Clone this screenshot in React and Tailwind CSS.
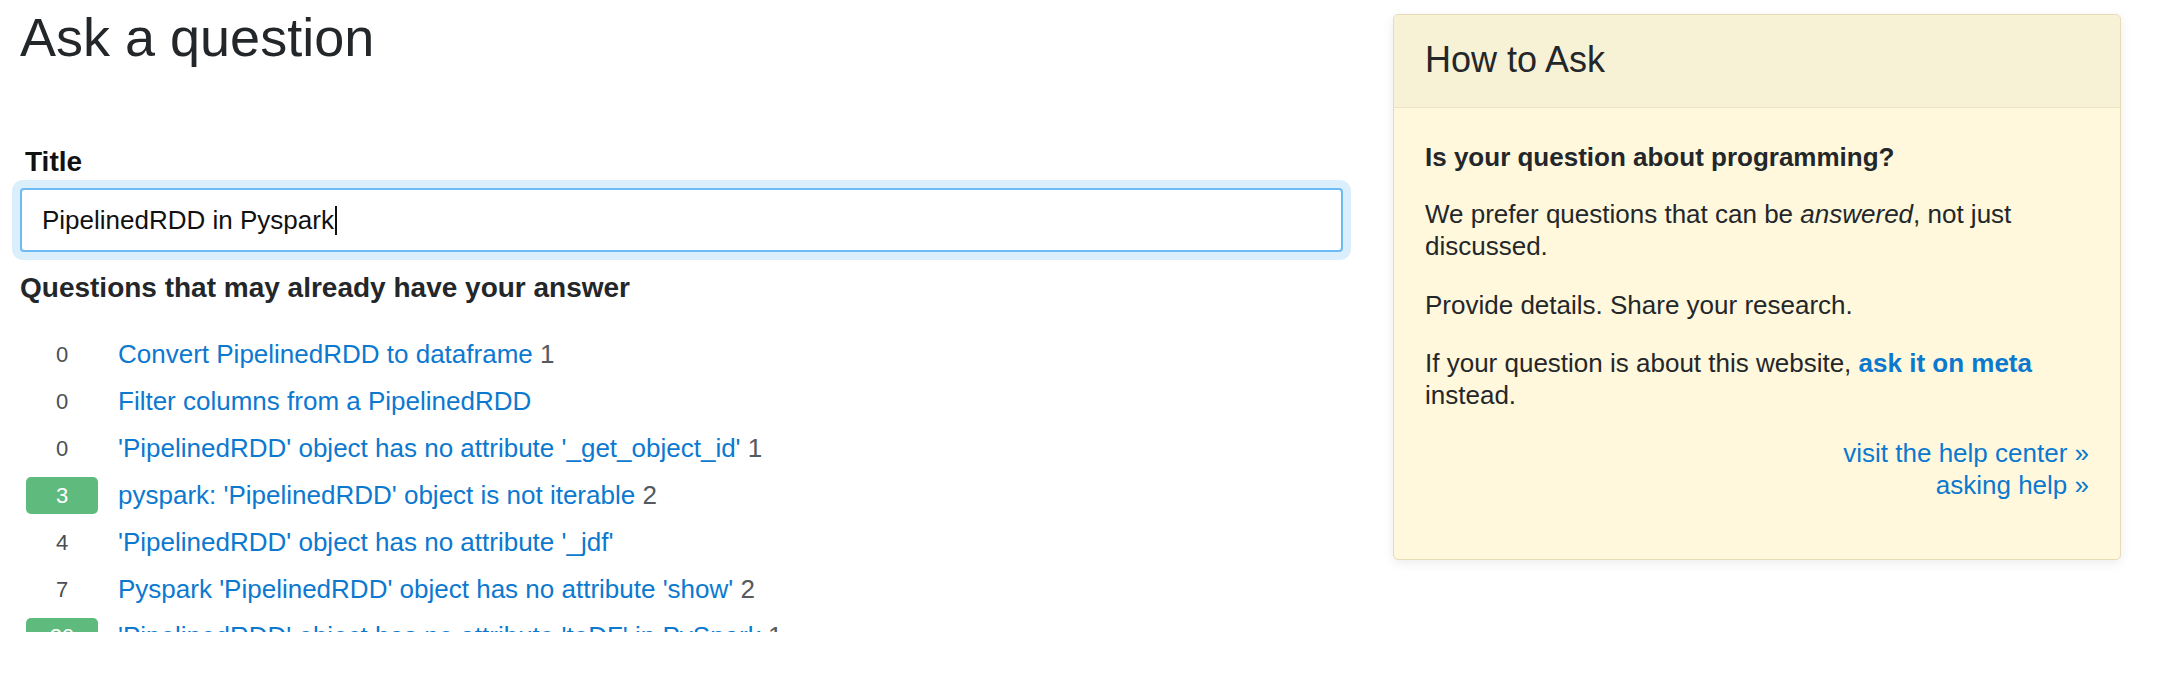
const similar = [
  { votes: 0, title: 'Convert PipelinedRDD to dataframe', answers: 1 },
  { votes: 0, title: 'Filter columns from a PipelinedRDD' },
  { votes: 0, title: "'PipelinedRDD' object has no attribute '_get_object_id'", answers: 1 },
  { votes: 3, title: "pyspark: 'PipelinedRDD' object is not iterable", answers: 2, accepted: true },
  { votes: 4, title: "'PipelinedRDD' object has no attribute '_jdf'" },
  { votes: 7, title: "Pyspark 'PipelinedRDD' object has no attribute 'show'", answers: 2 },
  { votes: 20, title: "'PipelinedRDD' object has no attribute 'toDF' in PySpark", answers: 1, accepted: true },
];

function SimilarRow({ q }) {
  return (
    <div className="flex h-[47px] items-center">
      <div
        className={
          q.accepted
            ? 'ml-[6px] flex h-[37px] w-[72px] items-center justify-center rounded-[5px] bg-[#5fba7d] text-[22px] text-white'
            : 'ml-[6px] flex h-[37px] w-[72px] items-center justify-center text-[22px] text-[#4a4f53]'
        }
      >
        {q.votes}
      </div>
      <div className="ml-[20px] whitespace-nowrap text-[26px]">
        <a href="#" className="text-[#0c79cf]">{q.title}</a>
        {q.answers && <span className="text-[#535a60]"> {q.answers}</span>}
      </div>
    </div>
  );
}

function HowToAsk() {
  return (
    <div className="mt-[8px] w-[728px] shrink-0 self-start rounded-[5px] border border-[#e6dcb8] bg-[#fff8dc] shadow-[0_3px_12px_rgba(0,0,0,0.08)]">
      <div className="rounded-t-[5px] border-b border-[#ebe3c4] bg-[#f7f1d6] px-[31px] pt-[24px] pb-[26px]">
        <h2 className="text-[36px] leading-[42px] text-[#242729]">How to Ask</h2>
      </div>
      <div className="px-[31px] pt-[33px] pb-[58px] text-[26px] leading-[32px] text-[#242729]">
        <p className="mb-[25px] font-bold">Is your question about programming?</p>
        <p className="mb-[27px]">
          We prefer questions that can be <em>answered</em>, not just discussed.
        </p>
        <p className="mb-[26px]">Provide details. Share your research.</p>
        <p className="mb-[26px]">
          If your question is about this website,{' '}
          <a href="#" className="font-bold text-[#0c79cf]">ask it on meta</a> instead.
        </p>
        <div className="flex flex-col items-end text-[#0c79cf]">
          <a href="#">visit the help center »</a>
          <a href="#">asking help »</a>
        </div>
      </div>
    </div>
  );
}

export default function App() {
  return (
    <div className="flex min-h-[678px] items-start gap-[50px] bg-white pl-[20px] pt-[6px] font-[family-name:Liberation_Sans,Arial,sans-serif] text-[#242729]">
      <div className="w-[1323px] shrink-0">
        <h1 className="text-[54px] leading-[62px]">Ask a question</h1>

        <label className="mt-[77px] block pl-[5px] text-[28px] font-bold leading-[34px] text-[#111]">Title</label>
        <div className="mt-[9px] flex h-[64px] items-center rounded-[4px] border-2 border-[#6dbbf5] bg-white px-[20px] text-[26px] text-[#111] shadow-[0_0_0_8px_#dbeefc]">
          <span>PipelinedRDD in Pyspark</span>
          <span className="ml-px h-[29px] w-[2px] bg-[#111]" />
        </div>

        <h3 className="mt-[19px] text-[28px] font-bold leading-[34px]">Questions that may already have your answer</h3>

        <div className="mt-[26px] h-[301px] overflow-hidden">
          {similar.map((q, i) => (
            <SimilarRow key={i} q={q} />
          ))}
        </div>
      </div>

      <HowToAsk />
    </div>
  );
}
